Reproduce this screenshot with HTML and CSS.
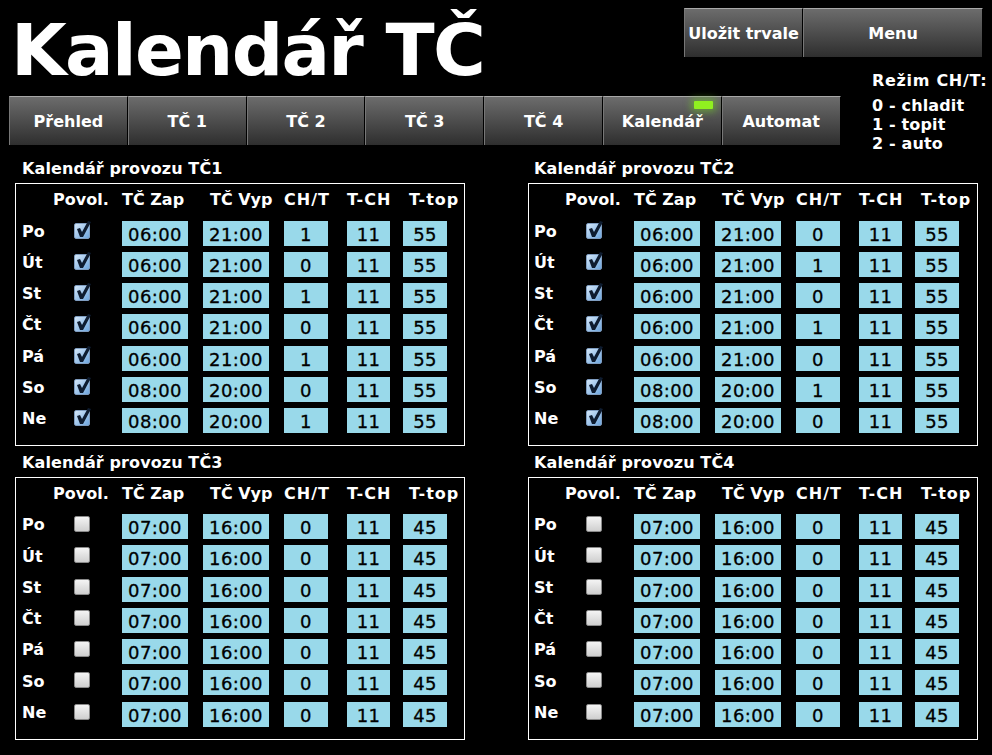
FILE: index.html
```html
<!DOCTYPE html>
<html lang="cs">
<head>
<meta charset="utf-8">
<title>Kalendář TČ</title>
<link rel="stylesheet" href="styles.css">
</head>
<body>
<div class="page">
<header class="top">
  <h1 class="title">Kalendář TČ</h1>
  <div class="actions">
    <button class="btn btn-save">Uložit trvale</button>
    <button class="btn btn-menu">Menu</button>
  </div>
</header>
<div class="navrow">
  <nav class="nav">
    <button class="btn">Přehled</button>
    <button class="btn">TČ 1</button>
    <button class="btn">TČ 2</button>
    <button class="btn">TČ 3</button>
    <button class="btn">TČ 4</button>
    <button class="btn btn-active">Kalendář<span class="led"></span></button>
    <button class="btn">Automat</button>
  </nav>
  <aside class="legend">
    <div class="legend-title">Režim CH/T:</div>
    <div class="legend-item">0 - chladit</div>
    <div class="legend-item">1 - topit</div>
    <div class="legend-item">2 - auto</div>
  </aside>
</div>
<main class="panels">
<section class="panel">
  <h2 class="panel-title">Kalendář provozu TČ1</h2>
  <div class="box">
    <div class="head"><span>Povol.</span><span>TČ Zap</span><span>TČ Vyp</span><span class="wide">CH/T</span><span class="wide">T-CH</span><span class="wide">T-top</span></div>
    <div class="row"><span class="day">Po</span><label class="check"><input type="checkbox" checked><svg viewBox="0 0 18 18"><path d="M3 8l3-1 2 4 6-11 3 1-8 15H6z"/></svg></label><span class="cell">06:00</span><span class="cell">21:00</span><span class="cell">1</span><span class="cell">11</span><span class="cell">55</span></div>
    <div class="row"><span class="day">Út</span><label class="check"><input type="checkbox" checked><svg viewBox="0 0 18 18"><path d="M3 8l3-1 2 4 6-11 3 1-8 15H6z"/></svg></label><span class="cell">06:00</span><span class="cell">21:00</span><span class="cell">0</span><span class="cell">11</span><span class="cell">55</span></div>
    <div class="row"><span class="day">St</span><label class="check"><input type="checkbox" checked><svg viewBox="0 0 18 18"><path d="M3 8l3-1 2 4 6-11 3 1-8 15H6z"/></svg></label><span class="cell">06:00</span><span class="cell">21:00</span><span class="cell">1</span><span class="cell">11</span><span class="cell">55</span></div>
    <div class="row"><span class="day">Čt</span><label class="check"><input type="checkbox" checked><svg viewBox="0 0 18 18"><path d="M3 8l3-1 2 4 6-11 3 1-8 15H6z"/></svg></label><span class="cell">06:00</span><span class="cell">21:00</span><span class="cell">0</span><span class="cell">11</span><span class="cell">55</span></div>
    <div class="row"><span class="day">Pá</span><label class="check"><input type="checkbox" checked><svg viewBox="0 0 18 18"><path d="M3 8l3-1 2 4 6-11 3 1-8 15H6z"/></svg></label><span class="cell">06:00</span><span class="cell">21:00</span><span class="cell">1</span><span class="cell">11</span><span class="cell">55</span></div>
    <div class="row"><span class="day">So</span><label class="check"><input type="checkbox" checked><svg viewBox="0 0 18 18"><path d="M3 8l3-1 2 4 6-11 3 1-8 15H6z"/></svg></label><span class="cell">08:00</span><span class="cell">20:00</span><span class="cell">0</span><span class="cell">11</span><span class="cell">55</span></div>
    <div class="row"><span class="day">Ne</span><label class="check"><input type="checkbox" checked><svg viewBox="0 0 18 18"><path d="M3 8l3-1 2 4 6-11 3 1-8 15H6z"/></svg></label><span class="cell">08:00</span><span class="cell">20:00</span><span class="cell">1</span><span class="cell">11</span><span class="cell">55</span></div>
  </div>
</section>
<section class="panel">
  <h2 class="panel-title">Kalendář provozu TČ2</h2>
  <div class="box">
    <div class="head"><span>Povol.</span><span>TČ Zap</span><span>TČ Vyp</span><span class="wide">CH/T</span><span class="wide">T-CH</span><span class="wide">T-top</span></div>
    <div class="row"><span class="day">Po</span><label class="check"><input type="checkbox" checked><svg viewBox="0 0 18 18"><path d="M3 8l3-1 2 4 6-11 3 1-8 15H6z"/></svg></label><span class="cell">06:00</span><span class="cell">21:00</span><span class="cell">0</span><span class="cell">11</span><span class="cell">55</span></div>
    <div class="row"><span class="day">Út</span><label class="check"><input type="checkbox" checked><svg viewBox="0 0 18 18"><path d="M3 8l3-1 2 4 6-11 3 1-8 15H6z"/></svg></label><span class="cell">06:00</span><span class="cell">21:00</span><span class="cell">1</span><span class="cell">11</span><span class="cell">55</span></div>
    <div class="row"><span class="day">St</span><label class="check"><input type="checkbox" checked><svg viewBox="0 0 18 18"><path d="M3 8l3-1 2 4 6-11 3 1-8 15H6z"/></svg></label><span class="cell">06:00</span><span class="cell">21:00</span><span class="cell">0</span><span class="cell">11</span><span class="cell">55</span></div>
    <div class="row"><span class="day">Čt</span><label class="check"><input type="checkbox" checked><svg viewBox="0 0 18 18"><path d="M3 8l3-1 2 4 6-11 3 1-8 15H6z"/></svg></label><span class="cell">06:00</span><span class="cell">21:00</span><span class="cell">1</span><span class="cell">11</span><span class="cell">55</span></div>
    <div class="row"><span class="day">Pá</span><label class="check"><input type="checkbox" checked><svg viewBox="0 0 18 18"><path d="M3 8l3-1 2 4 6-11 3 1-8 15H6z"/></svg></label><span class="cell">06:00</span><span class="cell">21:00</span><span class="cell">0</span><span class="cell">11</span><span class="cell">55</span></div>
    <div class="row"><span class="day">So</span><label class="check"><input type="checkbox" checked><svg viewBox="0 0 18 18"><path d="M3 8l3-1 2 4 6-11 3 1-8 15H6z"/></svg></label><span class="cell">08:00</span><span class="cell">20:00</span><span class="cell">1</span><span class="cell">11</span><span class="cell">55</span></div>
    <div class="row"><span class="day">Ne</span><label class="check"><input type="checkbox" checked><svg viewBox="0 0 18 18"><path d="M3 8l3-1 2 4 6-11 3 1-8 15H6z"/></svg></label><span class="cell">08:00</span><span class="cell">20:00</span><span class="cell">0</span><span class="cell">11</span><span class="cell">55</span></div>
  </div>
</section>
<section class="panel">
  <h2 class="panel-title">Kalendář provozu TČ3</h2>
  <div class="box">
    <div class="head"><span>Povol.</span><span>TČ Zap</span><span>TČ Vyp</span><span class="wide">CH/T</span><span class="wide">T-CH</span><span class="wide">T-top</span></div>
    <div class="row"><span class="day">Po</span><label class="check"><input type="checkbox"></label><span class="cell">07:00</span><span class="cell">16:00</span><span class="cell">0</span><span class="cell">11</span><span class="cell">45</span></div>
    <div class="row"><span class="day">Út</span><label class="check"><input type="checkbox"></label><span class="cell">07:00</span><span class="cell">16:00</span><span class="cell">0</span><span class="cell">11</span><span class="cell">45</span></div>
    <div class="row"><span class="day">St</span><label class="check"><input type="checkbox"></label><span class="cell">07:00</span><span class="cell">16:00</span><span class="cell">0</span><span class="cell">11</span><span class="cell">45</span></div>
    <div class="row"><span class="day">Čt</span><label class="check"><input type="checkbox"></label><span class="cell">07:00</span><span class="cell">16:00</span><span class="cell">0</span><span class="cell">11</span><span class="cell">45</span></div>
    <div class="row"><span class="day">Pá</span><label class="check"><input type="checkbox"></label><span class="cell">07:00</span><span class="cell">16:00</span><span class="cell">0</span><span class="cell">11</span><span class="cell">45</span></div>
    <div class="row"><span class="day">So</span><label class="check"><input type="checkbox"></label><span class="cell">07:00</span><span class="cell">16:00</span><span class="cell">0</span><span class="cell">11</span><span class="cell">45</span></div>
    <div class="row"><span class="day">Ne</span><label class="check"><input type="checkbox"></label><span class="cell">07:00</span><span class="cell">16:00</span><span class="cell">0</span><span class="cell">11</span><span class="cell">45</span></div>
  </div>
</section>
<section class="panel">
  <h2 class="panel-title">Kalendář provozu TČ4</h2>
  <div class="box">
    <div class="head"><span>Povol.</span><span>TČ Zap</span><span>TČ Vyp</span><span class="wide">CH/T</span><span class="wide">T-CH</span><span class="wide">T-top</span></div>
    <div class="row"><span class="day">Po</span><label class="check"><input type="checkbox"></label><span class="cell">07:00</span><span class="cell">16:00</span><span class="cell">0</span><span class="cell">11</span><span class="cell">45</span></div>
    <div class="row"><span class="day">Út</span><label class="check"><input type="checkbox"></label><span class="cell">07:00</span><span class="cell">16:00</span><span class="cell">0</span><span class="cell">11</span><span class="cell">45</span></div>
    <div class="row"><span class="day">St</span><label class="check"><input type="checkbox"></label><span class="cell">07:00</span><span class="cell">16:00</span><span class="cell">0</span><span class="cell">11</span><span class="cell">45</span></div>
    <div class="row"><span class="day">Čt</span><label class="check"><input type="checkbox"></label><span class="cell">07:00</span><span class="cell">16:00</span><span class="cell">0</span><span class="cell">11</span><span class="cell">45</span></div>
    <div class="row"><span class="day">Pá</span><label class="check"><input type="checkbox"></label><span class="cell">07:00</span><span class="cell">16:00</span><span class="cell">0</span><span class="cell">11</span><span class="cell">45</span></div>
    <div class="row"><span class="day">So</span><label class="check"><input type="checkbox"></label><span class="cell">07:00</span><span class="cell">16:00</span><span class="cell">0</span><span class="cell">11</span><span class="cell">45</span></div>
    <div class="row"><span class="day">Ne</span><label class="check"><input type="checkbox"></label><span class="cell">07:00</span><span class="cell">16:00</span><span class="cell">0</span><span class="cell">11</span><span class="cell">45</span></div>
  </div>
</section>
</main>
</div>
</body>
</html>
```
FILE: styles.css
```css
* { box-sizing: border-box; }
html, body { margin: 0; height: 100%; background: #000; overflow: hidden; }
body { font-family: "DejaVu Sans", Verdana, sans-serif; color: #fff; }
.page { width: 992px; height: 755px; }

.top { height: 96px; display: flex; justify-content: space-between; padding: 8px 9px 0 11px; }
.title { margin: 0; font-size: 72px; line-height: 85px; font-weight: 700; letter-spacing: -1.7px; white-space: nowrap; }
.actions { display: flex; height: 49px; }

.btn {
  display: block; position: relative; padding: 2px 0 0; width: 119px; height: 49px;
  color: #fff; font: 700 16px/1 "DejaVu Sans", Verdana, sans-serif;
  background: linear-gradient(#6c6c6c, #2e2e2e);
  border: 0; border-top: 1px solid #a8a8a8; border-left: 1px solid #777; border-right: 1px solid #000; white-space: nowrap;
}
.btn-save { width: 119px; }
.btn-menu { width: 180px; }

.navrow { display: flex; justify-content: space-between; padding: 0 4px 0 9px; height: 62px; }
.nav { display: flex; height: 49px; }
.nav .btn { width: 118.8px; }
.led {
  position: absolute; top: 4px; right: 8px; width: 19px; height: 8px; border-radius: 1px;
  background: #90f020; box-shadow: 0 0 7px 3px rgba(110, 210, 30, .5);
}
.legend { margin-top: -25px; width: 116px; font-size: 16px; line-height: 19px; font-weight: 700; letter-spacing: .15px; white-space: nowrap; }
.legend-title { margin-bottom: 7.4px; letter-spacing: .7px; }
.legend-item { line-height: 18.6px; }

.panels { display: grid; grid-template-columns: 450px 450px; column-gap: 63px; row-gap: 6px; padding-left: 15px; }
.panel-title { margin: 0; height: 25px; padding-left: 7px; font-size: 16px; line-height: 21px; font-weight: 700; letter-spacing: .1px; white-space: nowrap; }
.panel:nth-child(even) .panel-title,
.panel:nth-child(even) .head,
.panel:nth-child(even) .row { margin-left: -1px; }
.box { width: 450px; height: 263px; border: 1px solid #fff; }

.head { display: grid; grid-template-columns: 69px 88px 74px 63px 62px auto; height: 37px; padding: 5px 0 0 37px; font-size: 16px; line-height: 21px; font-weight: 700; white-space: nowrap; }
.panel:nth-child(n+3) .head { height: 36.2px; }
.wide { letter-spacing: 1px; }
.row { display: grid; grid-template-columns: 38px 62px 81px 81px 63px 56px 44px; height: 31.17px; padding-left: 6px; }
.panel:nth-child(n+3) .row { height: 31.25px; }
.cell { width: 44px; height: 25px; background: #99d9ea; color: #000; font-size: 18px; line-height: 27px; letter-spacing: .4px; text-align: center; font-weight: 400; -webkit-text-stroke: .3px #000; }
.row .cell:nth-child(3), .row .cell:nth-child(4) { width: 66px; }
.row .cell:nth-child(6) { width: 43px; }
.day { font-size: 16px; line-height: 20px; font-weight: 700; padding-top: 1px; }
.panel:nth-child(n+3) .day { padding-top: 1.3px; }
.check { position: relative; display: block; width: 16px; height: 16px; margin: 2px 0 0 14px; }
.check input {
  appearance: none; display: block; margin: 0; width: 16px; height: 16px; border-radius: 2px;
  background: linear-gradient(#f4f4f4, #cfcfcf); border: 1px solid #8a8a8a;
}
.check input:checked { background: linear-gradient(135deg, #d4e7f9, #6ea6de); border-color: #7f9dc0; }
.check svg { position: absolute; left: 0; top: -2px; width: 18px; height: 18px; fill: #0e1c30; }
```
